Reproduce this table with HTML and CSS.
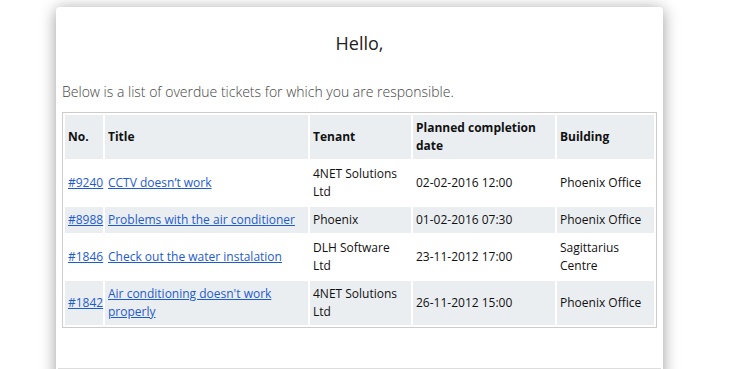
FILE: index.html
```html
<!DOCTYPE html>
<html>
<head>
<meta charset="utf-8">
<link rel="stylesheet" href="styles.css">
</head>
<body>
<div class="card">
  <h1 class="greeting">Hello,</h1>
  <p class="intro">Below is a list of overdue tickets for which you are responsible.</p>
  <table class="tickets">
    <colgroup>
      <col class="c-no"><col class="c-title"><col class="c-tenant"><col class="c-date"><col class="c-building">
    </colgroup>
    <thead>
      <tr><th>No.</th><th>Title</th><th>Tenant</th><th>Planned completion date</th><th>Building</th></tr>
    </thead>
    <tbody>
      <tr><td><a href="#">#9240</a></td><td><a href="#">CCTV doesn’t work</a></td><td>4NET Solutions Ltd</td><td>02-02-2016 12:00</td><td>Phoenix Office</td></tr>
      <tr class="alt"><td><a href="#">#8988</a></td><td><a href="#">Problems with the air conditioner</a></td><td>Phoenix</td><td>01-02-2016 07:30</td><td>Phoenix Office</td></tr>
      <tr><td><a href="#">#1846</a></td><td><a href="#">Check out the water instalation </a></td><td>DLH Software Ltd</td><td>23-11-2012 17:00</td><td>Sagittarius Centre</td></tr>
      <tr class="alt"><td><a href="#">#1842</a></td><td><a href="#">Air conditioning doesn't work properly</a></td><td>4NET Solutions Ltd</td><td>26-11-2012 15:00</td><td>Phoenix Office</td></tr>
    </tbody>
  </table>
  <div class="footer"></div>
</div>
</body>
</html>
```
FILE: styles.css
```css
html, body { margin: 0; padding: 0; background: #fff; }
body { font-family: "Open Sans", "Noto Sans", sans-serif; color: #222; }
.card {
  width: 607px;
  box-sizing: border-box;
  margin: 7px 0 0 56px;
  padding: 24px 6px 0 6px;
  background: #fff;
  border-radius: 4px;
  box-shadow: 0 2px 16px rgba(0,0,0,0.4);
  height: 380px;
}
.greeting {
  margin: 0;
  text-align: center;
  font-size: 18px;
  font-weight: 400;
  line-height: 24px;
  color: #222;
}
.intro {
  margin: 27px 0 0 0;
  font-size: 14px;
  font-weight: 300;
  line-height: 20px;
  color: #444;
}
.tickets {
  margin-top: 10px;
  width: 595px;
  table-layout: fixed;
  border: 1px solid #ccc;
  border-spacing: 2px;
  font-size: 12px;
  line-height: 18px;
  color: #111;
}
.c-no { width: 38px; }
.c-title { width: 203px; }
.c-tenant { width: 101px; }
.c-date { width: 142px; }
.c-building { width: 97px; }
.tickets th, .tickets td {
  padding: 4px 3px;
  text-align: left;
  vertical-align: middle;
}
.tickets th { background: #ebeef1; font-weight: 700; }
.tickets tr.alt td { background: #ebeef1; }
.tickets a { color: #1d5bd0; text-decoration: underline; }
.footer {
  margin: 40px -4px 0 -4px;
  border-top: 2px solid #ddd;
}
```
